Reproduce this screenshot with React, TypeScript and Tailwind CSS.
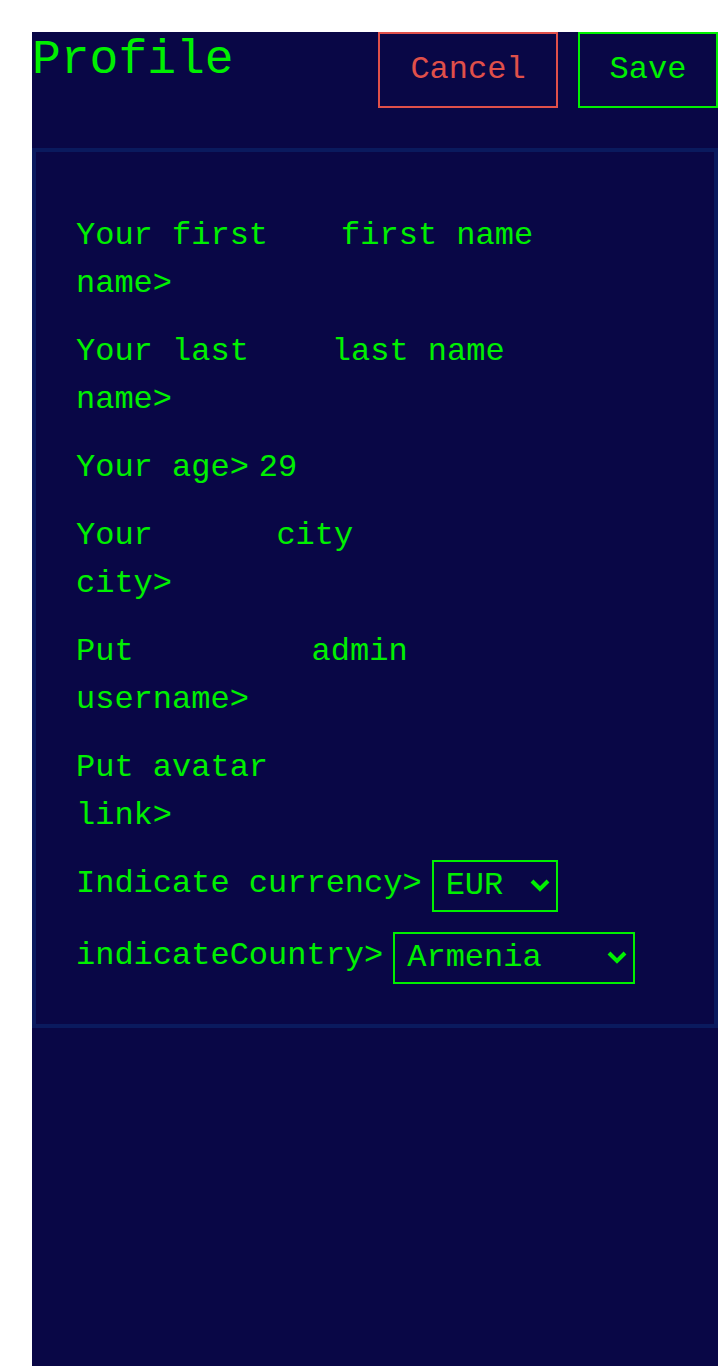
// Text rows: label and input share the row, both shrink
const textFields = [
  { label: 'Your first name>', value: 'first name' },
  { label: 'Your last name>', value: 'last name' },
  { label: 'Your age>', value: '29' },
  { label: 'Your city>', value: 'city' },
  { label: 'Put username>', value: 'admin' },
  { label: 'Put avatar link>', value: '' },
]

export default function App() {
  return (
    <div className="min-h-screen bg-white pl-8 pt-8">
      <div className="min-h-[1334px] bg-[#090746] text-[#00f000] font-['Liberation_Mono',monospace]">

        {/* Header */}
        <div className="flex items-start justify-between">
          <h1 className="text-[48px] leading-[56px] font-normal">
            Profile
          </h1>
          <div className="flex gap-5">
            <button className="h-[76px] w-[180px] border-2 border-[#e0504a] text-[32px] leading-[48px] text-[#e0504a]">
              Cancel
            </button>
            <button className="h-[76px] w-[140px] border-2 border-[#00f000] text-[32px] leading-[48px] text-[#00f000]">
              Save
            </button>
          </div>
        </div>

        {/* Form card */}
        <div className="mt-10 border-4 border-[#0a1a5e] px-10 pt-[60px] pb-10">
          <div className="flex flex-col gap-5 text-[32px] leading-[48px]">
            {textFields.map(f => (
              <div key={f.label} className="flex items-start gap-[10px]">
                <label className="min-w-0">{f.label}</label>
                <input
                  defaultValue={f.value}
                  className="min-w-0 w-[401px] h-12 bg-transparent text-[#00f000] outline-none"
                />
              </div>
            ))}

            <div className="flex items-start gap-[10px]">
              <label>Indicate currency&gt;</label>
              <SelectBox width="w-[126px]" options={['EUR', 'USD', 'RUB']} />
            </div>

            <div className="flex items-start gap-[10px]">
              <label>indicateCountry&gt;</label>
              <SelectBox width="w-[242px]" options={['Armenia', 'Russia', 'Georgia']} />
            </div>
          </div>
        </div>

      </div>
    </div>
  )
}

function SelectBox({ width, options }: { width: string; options: string[] }) {
  return (
    <div className={`relative ${width} h-[52px]`}>
      <select className="h-full w-full appearance-none border-2 border-[#00f000] bg-transparent pl-3 text-[32px] leading-[48px] text-[#00f000] outline-none">
        {options.map(o => (
          <option key={o} className="bg-[#090746]">{o}</option>
        ))}
      </select>
      {/* chevron */}
      <svg
        className="pointer-events-none absolute right-[8px] top-[19px]"
        width="20"
        height="13"
        viewBox="0 0 20 13"
        fill="none"
        stroke="#00f000"
        strokeWidth="4"
      >
        <polyline points="2,2 10,10 18,2" />
      </svg>
    </div>
  )
}
